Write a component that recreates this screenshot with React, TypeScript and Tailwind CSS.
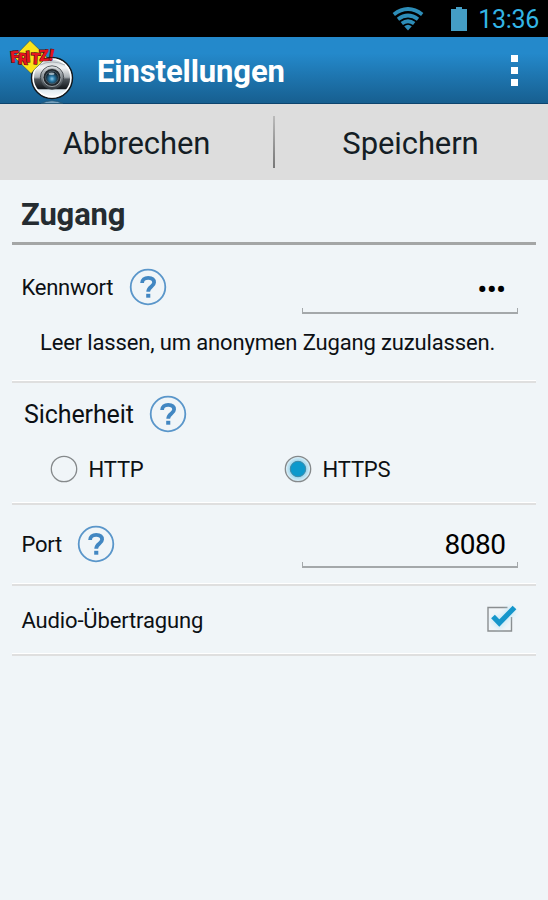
import React, { useState } from "react";

const HelpIcon: React.FC = () => (
  <svg className="size-[38px] shrink-0" viewBox="0 0 38 38" fill="none">
    <circle cx="19" cy="19" r="17.3" stroke="#5a96ca" strokeWidth="1.8" />
    <path
      d="M13.1 15 C13.1 11.6 15.6 9.8 19.2 9.8 C22.9 9.8 25.1 11.6 25.1 14.5 C25.1 18.6 19.2 18.4 19.2 23.8"
      stroke="#4287c2"
      strokeWidth="3.8"
    />
    <rect x="17.2" y="25.8" width="4.1" height="3.9" fill="#4287c2" />
  </svg>
);

const Logo: React.FC = () => (
  <svg className="w-[72px] h-[67px] shrink-0" viewBox="4 37 72 67">
    <defs>
      <linearGradient id="ring" x1="0" y1="0" x2="0" y2="1">
        <stop offset="0" stopColor="#b9c1c6" />
        <stop offset="0.25" stopColor="#f3f4f5" />
        <stop offset="0.48" stopColor="#a7adb2" />
        <stop offset="0.53" stopColor="#4c5359" />
        <stop offset="0.76" stopColor="#15191d" />
        <stop offset="0.79" stopColor="#dfeaf0" />
        <stop offset="1" stopColor="#ffffff" />
      </linearGradient>
      <linearGradient id="rim" x1="0" y1="0" x2="0" y2="1">
        <stop offset="0" stopColor="#e8ecee" />
        <stop offset="0.5" stopColor="#777e84" />
        <stop offset="1" stopColor="#30363b" />
      </linearGradient>
      <radialGradient id="lens" cx="0.5" cy="0.6" r="0.5">
        <stop offset="0" stopColor="#8cc8e6" />
        <stop offset="0.4" stopColor="#2b7ba8" />
        <stop offset="1" stopColor="#10202b" />
      </radialGradient>
    </defs>
    <circle cx="52" cy="78" r="20.4" fill="url(#ring)" stroke="#11171c" strokeWidth="1.6" />
    <circle cx="52" cy="78" r="18.9" fill="none" stroke="#ffffff" strokeWidth="1.6" />
    <path d="M40 65 Q52 59 65 65" fill="none" stroke="#a2a9ae" strokeWidth="0.8" />
    <circle cx="52" cy="77.5" r="11.7" fill="url(#rim)" stroke="#353b40" strokeWidth="0.8" />
    <circle cx="52" cy="77.5" r="9" fill="#20262b" stroke="#b3b9bd" strokeWidth="0.8" />
    <circle cx="52" cy="77.5" r="6.4" fill="url(#lens)" stroke="#536570" strokeWidth="0.8" />
    <ellipse cx="51.5" cy="73.8" rx="3" ry="1.3" fill="#d6e2e8" opacity="0.7" />
    <path d="M41 103.5 Q52 98 63 103.5Z" fill="#77a3c1" stroke="#245574" strokeWidth="0.8" />
    <path
      d="M30 40.5 L47 57 L38 66 Q33.5 70 32.5 72 L31 73.5 L14 57Z"
      fill="#fbe41b"
      stroke="#2f4d4d"
      strokeWidth="0.6"
    />
    <text
      x="11 17.8 26 30.6 39.4 48.2"
      y="62.6 64 62.2 63.8 61 60"
      rotate="-6 4 -4 3 -3 10"
      fontFamily="Roboto, sans-serif"
      fontSize="15.5"
      fontWeight="900"
      fill="#e8141e"
      stroke="#4a1115"
      strokeWidth="1.2"
      paintOrder="stroke"
    >
      FRITZ!
    </text>
  </svg>
);

const StatusBar: React.FC = () => (
  <div className="flex h-[37px] items-center justify-end bg-black pr-[9px]">
    <svg className="mr-[27px] h-[24px] w-[32px]" viewBox="0 0 32 24" fill="none" stroke="#2d8db8" strokeWidth="3.8">
      <path d="M1.8 7.4 Q16 -3.5 30.2 7.4" />
      <path d="M6 12.2 Q16 4.7 26 12.2" />
      <path d="M9.8 16.6 Q16 11.8 22.2 16.6" />
      <path d="M12.2 19.3 Q16 16.3 19.8 19.3 L16 23.6Z" fill="#2d8db8" stroke="none" />
    </svg>
    <svg className="mr-[11px] h-[24px] w-[16px]" viewBox="0 0 16 24" fill="#449ec5">
      <path d="M5 0h6v2h5v22H0V2h5z" />
    </svg>
    <span className="pt-px text-[25px] leading-none tracking-[-0.3px] text-[#33b5e5]">13:36</span>
  </div>
);

const Field: React.FC<{ children: React.ReactNode }> = ({ children }) => (
  <div className="ml-auto flex w-[216px] flex-col">
    <div className="flex h-[38px] items-center justify-end pr-3 text-black">{children}</div>
    <div className="h-[6px] border-x-[1.5px] border-b-2 border-[#a4a8aa]" />
  </div>
);

const Divider: React.FC = () => (
  <div className="mx-3 h-[3px] shrink-0 border-b-2 border-t border-b-[#dfdfdf] border-t-white" />
);

const Radio: React.FC<{ label: string; checked: boolean; onClick: () => void }> = ({ label, checked, onClick }) => (
  <button type="button" onClick={onClick} className="flex w-[234px] items-center gap-[10.5px]">
    <svg className="size-[28px]" viewBox="0 0 28 28">
      <defs>
        <radialGradient id="glow">
          <stop offset="0.6" stopColor="#9bd5ec" />
          <stop offset="1" stopColor="#e2f1f8" />
        </radialGradient>
      </defs>
      <circle cx="14" cy="14" r="12.7" fill={checked ? "url(#glow)" : "none"} stroke="#85898b" strokeWidth="1.3" />
      {checked && <circle cx="14" cy="14" r="7.7" fill="#0d99cc" stroke="#4189a6" strokeWidth="1" />}
    </svg>
    <span className="pt-[2px] text-[22px]">{label}</span>
  </button>
);

const App: React.FC = () => {
  const [protocol, setProtocol] = useState("HTTPS");
  const [audio, setAudio] = useState(true);

  return (
    <div className="flex h-[900px] w-[548px] flex-col overflow-hidden bg-[#f0f5f8] font-[Roboto,sans-serif] text-[22px] leading-none tracking-[-0.15px] text-[#0c1014]">
      <StatusBar />
      <header className="flex h-[67px] items-center border-b border-[#0d446e] bg-linear-to-b from-[#2489cb] from-25% to-[#175f90] pl-1">
        <Logo />
        <h1 className="ml-[21px] pt-[3px] text-[31px] font-bold tracking-[-0.1px] text-white">Einstellungen</h1>
        <div className="ml-auto mr-[30px] flex flex-col gap-[5px]">
          <span className="size-[7px] bg-white" />
          <span className="size-[7px] bg-white" />
          <span className="size-[7px] bg-white" />
        </div>
      </header>

      <div className="flex h-[76px] items-center bg-[#dddddd] text-[31px] tracking-[-0.1px] text-[#141d25]">
        <button type="button" className="w-[273px] pt-[2px]">Abbrechen</button>
        <div className="h-[52px] w-[2px] bg-linear-to-b from-[#bbbbbb] to-[#777777]" />
        <button type="button" className="w-[273px] pt-[2px] pr-[2px]">Speichern</button>
      </div>

      <h2 className="mx-3 flex h-[65px] items-center border-b-[3px] border-[#a4a6a6] pl-[9px] pt-[7px] text-[31px] font-bold text-[#252c31]">
        Zugang
      </h2>

      <section className="flex h-[135px] flex-col">
        <div className="flex h-[83px] items-center pl-[21.5px] pr-[30.5px]">
          <span className="mr-4 pt-[2px] tracking-[-0.25px]">Kennwort</span>
          <HelpIcon />
          <div className="ml-auto pt-[10px]">
            <Field>
              <span className="pt-[3px] text-[30px] tracking-[-0.7px]">•••</span>
            </Field>
          </div>
        </div>
        <p className="pl-10 pt-1">Leer lassen, um anonymen Zugang zuzulassen.</p>
      </section>
      <Divider />

      <section className="flex h-[119px] flex-col">
        <div className="flex h-[62px] items-center pl-6">
          <span className="mr-[15px] pt-px text-[25px] tracking-[-0.1px]">Sicherheit</span>
          <HelpIcon />
        </div>
        <div className="flex h-[48px] items-center pl-[50px]">
          <Radio label="HTTP" checked={protocol === "HTTP"} onClick={() => setProtocol("HTTP")} />
          <Radio label="HTTPS" checked={protocol === "HTTPS"} onClick={() => setProtocol("HTTPS")} />
        </div>
      </section>
      <Divider />

      <section className="flex h-[78px] items-center pl-[21.5px] pr-[30.5px]">
        <span className="mr-[15px] pt-[2px] tracking-[-0.3px]">Port</span>
        <HelpIcon />
        <div className="ml-auto pt-[3px]">
          <Field>
            <span className="pt-[4px] text-[28px] tracking-[-0.5px]">8080</span>
          </Field>
        </div>
      </section>
      <Divider />

      <section className="flex h-[67px] items-center justify-between pl-[21.5px] pr-[28px]">
        <span className="pt-[2px]">Audio-Übertragung</span>
        <button type="button" aria-label="Audio-Übertragung" className="pb-[3px]" onClick={() => setAudio(!audio)}>
          <svg className="h-[34px] w-[36px]" viewBox="0 0 36 34" fill="none">
            <path d="M23.5 6.5H4V30H27.5V16" stroke="#8a8e90" strokeWidth="1.4" />
            {audio && (
              <>
                <path d="M9 16.5L15.3 22.5L29 7.5" stroke="#a9dff5" strokeWidth="9" opacity="0.5" className="blur-[2px]" />
                <path d="M9 15.5L15.3 22L30.5 6.5" stroke="#1496cb" strokeWidth="5.2" />
              </>
            )}
          </svg>
        </button>
      </section>
      <Divider />
    </div>
  );
};

export default App;
